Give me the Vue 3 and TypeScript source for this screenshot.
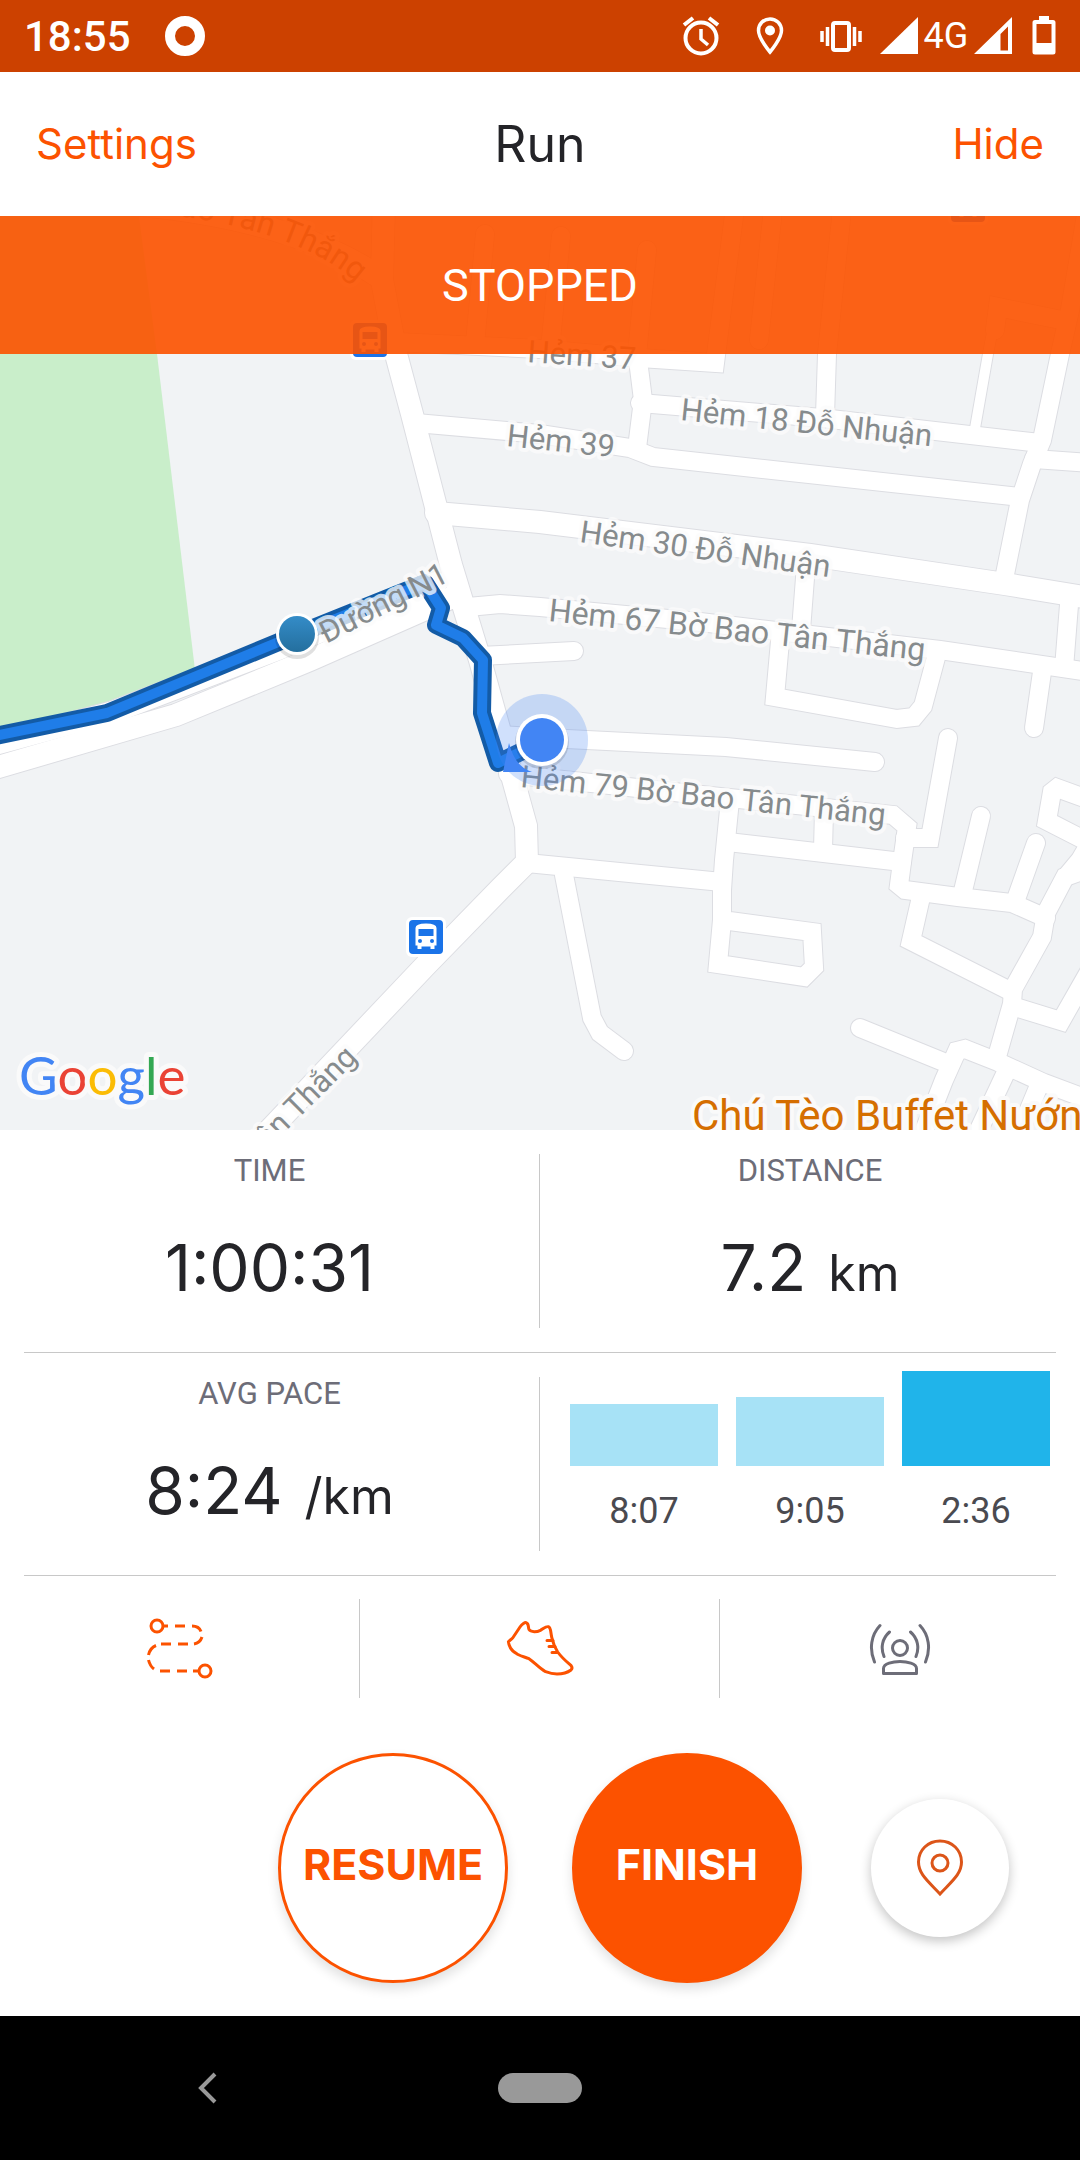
<script setup lang="ts">
interface Road { d: string; w: number }
interface Label { text: string; x: number; y: number; angle: number; large?: boolean }
interface Split { pace: string; height: number; current: boolean }

const wide: string[] = [
  'M384 200 L382 280 L396 354 L412 414 L451 565 L480 660 L526 826 L527 862 L500 889 L425 966 L262 1138',
  'M-5 768 L176 715 L310 660 L455 596',
  'M-5 744 L113 712 L278 649 L436 583',
  'M130 204 Q290 218 378 276',
  'M436 513 L540 522 L810 555 L1005 584 L1090 598',
]

const lanes: string[] = [
  'M395 342 L540 349 L640 358 L715 363 L736 200',
  'M561 236 L550 350', 'M485 234 L475 344', 'M647 250 L637 355', 'M774 200 L759 340',
  'M843 200 L827 354 L825 416',
  'M1090 192 L1070 310 L1060 354 L1042 440 L1032 464 L1020 500 L1003 584',
  'M995 330 L998 307 L1066 321',
  'M1034 459 L1090 463',
  'M638 360 L643 400 L637 448', 'M640 403 L822 418 L1040 443',
  'M416 423 L540 434 L630 448 L653 457 L1020 497',
  'M806 565 L801 630 M781 630 L775 697 L897 719 L914 717 L923 706 L938 650',
  'M1069 605 L1064 668',
  'M468 607 L500 604 L540 607 L700 622 L940 650 L1090 672',
  'M1042 672 L1034 728', 'M480 656 L574 651',
  'M500 735 L567 739 L726 747 L875 762',
  'M508 774 L720 797 L893 815 L907 827 L902 862 L899 885 L905 890 L958 897 L1012 903 L1046 918',
  'M905 838 L930 838 L948 738',
  'M527 863 L722 882',
  'M730 800 L724 860 L722 890 L722 920 L718 964 L804 977 L814 967 L812 932 L722 920',
  'M728 842 L902 862', 'M824 810 L823 850',
  'M564 875 L592 1018 L600 1033 L624 1051',
  'M981 816 L962 895', 'M1036 843 L1015 902',
  'M921 897 L911 941 L1012 992',
  'M1090 868 L1065 877 L1046 913 L1042 937 L1013 989 L1012 1004 L996 1060',
  'M1090 800 L1057 788 L1052 792 L1047 821 L1090 843 L1080 860 L1065 878',
  'M1012 1006 L1061 1021 L1090 970',
  'M860 1028 L946 1063',
  'M922 1136 L944 1080 L957 1051 L965 1049 L998 1062 L1044 1083 L1090 1100',
  'M1008 1068 L976 1136', 'M1040 1083 L1018 1136',
]

const roads: Road[] = [
  ...wide.map((d) => ({ d, w: 22 })),
  ...lanes.map((d) => ({ d, w: 18 })),
  { d: 'M996 312 L988 354 L974 434', w: 10 },
]

const route =
  'M-5 736 L107 713 L298 634 L425 583 L441 608 L436 625 L463 638 L483 660 L482 713 L498 763 L541 742'

const labels: Label[] = [
  { text: 'Hẻm 37', x: 527, y: 362, angle: 4 },
  { text: 'Hẻm 18 Đỗ Nhuận', x: 680, y: 420, angle: 6 },
  { text: 'Hẻm 39', x: 506, y: 446, angle: 6 },
  { text: 'Hẻm 30 Đỗ Nhuận', x: 579, y: 542, angle: 8 },
  { text: 'Hẻm 67 Bờ Bao Tân Thắng', x: 548, y: 621, angle: 6, large: true },
  { text: 'Hẻm 79 Bờ Bao Tân Thắng', x: 520, y: 787, angle: 6 },
  { text: 'Đường N1', x: 326, y: 644, angle: -27 },
  { text: 'Tân Thắng', x: 256, y: 1161, angle: -45 },
]

const stops = [
  { x: 353, y: 323 },
  { x: 951, y: 188 },
  { x: 409, y: 920 },
]

const splits: Split[] = [
  { pace: '8:07', height: 62, current: false },
  { pace: '9:05', height: 69, current: false },
  { pace: '2:36', height: 95, current: true },
]
</script>

<template>
  <div class="app">
    <div class="status">
      <span class="clock">18:55</span>
      <svg width="40" height="40" viewBox="0 0 40 40"><circle cx="20" cy="20" r="15" fill="none" stroke="#fff" stroke-width="10" /></svg>
      <div class="tray">
        <svg width="38" height="40" viewBox="0 0 38 40" fill="none" stroke="#fff">
          <circle cx="19" cy="22" r="15.5" stroke-width="4" />
          <path d="M19 13V23L26 29" stroke-width="3.5" />
          <path d="M2 9L11 2M36 9L27 2" stroke-width="4" />
        </svg>
        <svg width="28" height="40" viewBox="0 0 28 40">
          <path d="M14 3C7.500 3 2.500 8 2.500 14.500C2.500 22.500 14 36 14 36S25.500 22.500 25.500 14.500C25.500 8 20.500 3 14 3Z" fill="none" stroke="#fff" stroke-width="3.500" />
          <circle cx="14" cy="14.500" r="5" fill="#fff" />
        </svg>
        <svg width="42" height="40" viewBox="0 0 42 40">
          <rect x="13" y="7" width="16" height="27" rx="2" fill="none" stroke="#fff" stroke-width="4" />
          <path d="M2 15V26M7.500 11V30M34.500 11V30M40 15V26" stroke="#fff" stroke-width="3.500" />
        </svg>
        <div class="network">
          <svg width="38" height="40" viewBox="0 0 38 40"><path d="M38 1V38H0Z" fill="#fff" /></svg>
          <span>4G</span>
          <svg width="38" height="40" viewBox="0 0 38 40"><path fill-rule="evenodd" d="M38 1V38H0ZM34 10.500L26.500 18V34.500H34Z" fill="#fff" /></svg>
        </div>
        <svg width="24" height="40" viewBox="0 0 24 40">
          <path fill-rule="evenodd" d="M7 0H17V4H21Q23.500 4 23.500 6.500V36Q23.500 38.500 21 38.500H3Q0.500 38.500 0.500 36V6.500Q0.500 4 3 4H7ZM4.500 8V27H19.500V8Z" fill="#fff" />
        </svg>
      </div>
    </div>

    <header class="bar">
      <button type="button" class="link start">Settings</button>
      <h1>Run</h1>
      <button type="button" class="link end">Hide</button>
    </header>

    <section class="map">
      <svg class="canvas" viewBox="0 216 1080 914" role="img" aria-label="Route map">
        <defs>
          <path id="curve" d="M120 210 Q294 222 360 286" />
          <linearGradient id="dot" x1="0" y1="0" x2="0" y2="1">
            <stop offset="0" stop-color="#348cc8" />
            <stop offset="1" stop-color="#246f9e" />
          </linearGradient>
        </defs>
        <rect y="216" width="1080" height="914" fill="#f1f3f5" />
        <path d="M0 216H139L157 354L195 670V690L0 740Z" fill="#c9eeca" />
        <g fill="none" stroke="#dcdde2" stroke-linecap="round" stroke-miterlimit="3">
          <path v-for="(r, i) in roads" :key="i" :d="r.d" :stroke-width="r.w + 2" />
        </g>
        <g fill="none" stroke="#fff" stroke-linecap="round" stroke-miterlimit="3">
          <path v-for="(r, i) in roads" :key="i" :d="r.d" :stroke-width="r.w" />
        </g>

        <g fill="none" stroke-linejoin="round">
          <path :d="route" stroke="#135ba6" stroke-width="18" />
          <path :d="route" stroke="#1f7de8" stroke-width="10" />
        </g>

        <g v-for="(s, i) in stops" :key="i" :transform="`translate(${s.x} ${s.y})`">
          <rect x="-3" y="-3" width="40" height="40" rx="6" fill="#fff" />
          <rect width="34" height="34" rx="4" fill="#1a73e8" />
          <path d="M6.500 8Q6.500 3.500 17 3.500T27.500 8V25.500H25.500V29H21.500V26.500H12.500V29H8.500V25.500H6.500Z" fill="#fff" />
          <rect x="9.500" y="9" width="15" height="7" fill="#1a73e8" />
          <circle cx="11" cy="21" r="2" fill="#1a73e8" />
          <circle cx="23" cy="21" r="2" fill="#1a73e8" />
        </g>

        <g class="label">
          <text v-for="l in labels" :key="l.text" :class="{ large: l.large }" :transform="`translate(${l.x} ${l.y}) rotate(${l.angle})`">{{ l.text }}</text>
          <text class="large" text-anchor="end"><textPath href="#curve" startOffset="98%">Bao Tân Thắng</textPath></text>
        </g>
        <text class="place" x="692" y="1130">Chú Tèo Buffet Nướng</text>

        <ellipse cx="297" cy="638" rx="22" ry="21" fill="#000" opacity="0.12" />
        <circle cx="297" cy="634" r="21" fill="#fff" />
        <circle cx="297" cy="634" r="18" fill="url(#dot)" />

        <circle cx="542" cy="740" r="46" fill="#4285f4" opacity="0.25" />
        <path d="M509 743L503 772H532Q515 767 509 743Z" fill="#4285f4" />
        <circle cx="542" cy="742" r="27" fill="#000" opacity="0.12" />
        <circle cx="542" cy="740" r="26" fill="#fff" />
        <circle cx="542" cy="740" r="22" fill="#4285f4" />

        <text class="brand" x="19" y="1095"><tspan fill="#4285f4">G</tspan><tspan fill="#ea4335">o</tspan><tspan fill="#fbbc05">o</tspan><tspan fill="#4285f4">g</tspan><tspan fill="#34a853">l</tspan><tspan fill="#ea4335">e</tspan></text>
      </svg>
      <div class="banner">STOPPED</div>
    </section>

    <main>
      <div class="row">
        <div class="stat">
          <span class="name">TIME</span>
          <span class="value">1:00:31</span>
        </div>
        <div class="stat">
          <span class="name">DISTANCE</span>
          <span class="value">7.2 <small>km</small></span>
        </div>
      </div>
      <hr />
      <div class="row">
        <div class="stat">
          <span class="name">AVG PACE</span>
          <span class="value">8:24 <small>/km</small></span>
        </div>
        <div class="stat splits">
          <div v-for="s in splits" :key="s.pace" class="split">
            <div class="fill" :class="{ current: s.current }" :style="{ height: s.height + 'px' }"></div>
            <span>{{ s.pace }}</span>
          </div>
        </div>
      </div>
      <hr />
    </main>

    <div class="tools">
      <button type="button" aria-label="Route">
        <svg width="68" height="62" viewBox="0 0 68 62" fill="none" stroke="#fc5200" stroke-width="3">
          <circle cx="11" cy="8" r="6" />
          <circle cx="59" cy="53" r="6" />
          <path d="M17 8H22M29 8H39M46 8Q53 8 55 13.500M56 19Q54 25 48 26M42 26H32M25 26H15M10 27.500Q4 30 2.500 37M2.500 42Q4 48 8 51M14 53H24M31 53H41M47 53H53" />
        </svg>
      </button>
      <button type="button" aria-label="Shoe">
        <svg width="68" height="62" viewBox="0 -3 68 62" fill="none" stroke="#fc5200" stroke-width="3" stroke-linejoin="round" stroke-linecap="round">
          <path d="M2.400 20.700C4 19 6 18 7 16.500L14 6C16 3 19 1 20.500 1.800C23 3 22 6 23 8.500C25 11.500 31 11 34.400 9.300C37 8 40 5 42.500 5.700C45 6.500 44.500 11 45.800 16.700C47 22 49 27 51.700 31C56 37 61 41 65 44.500Q67 47 65 49C61 52 56 53 51 53C46 53 43 52 39.600 50.700C33 47 28 41 23 37.700C19 36 16 35.500 12 33.500C8 31 6 30 4.500 27Q2.500 23 2.400 20.700Z" />
          <path d="M41 19.500H47M43 25.500H49M46 31.500H51" />
        </svg>
      </button>
      <button type="button" aria-label="Beacon">
        <svg width="62" height="62" viewBox="0 -5 62 62" fill="none" stroke="#6d6d78" stroke-width="3" stroke-linecap="round" stroke-linejoin="round">
          <circle cx="31" cy="25" r="7.500" />
          <path d="M15 50.500H47.500V45.500C47.500 40.500 38 38.500 31 38.500S14.500 40.500 14.500 45.500V50.500Z" />
          <path d="M20.500 9C13 15.500 11.500 25 15 33.500M41.500 9C49 15.500 50.500 25 47 33.500M11 2.500C2 12 0 26 5.500 39M51 2.500C60 12 62 26 56.500 39" />
        </svg>
      </button>
    </div>

    <div class="actions">
      <div class="pair">
        <button type="button" class="round resume">RESUME</button>
        <button type="button" class="round finish">FINISH</button>
      </div>
      <button type="button" class="locate" aria-label="Show location">
        <svg width="48" height="58" viewBox="0 0 48 58" fill="none" stroke="#dc5519" stroke-width="3">
          <path d="M24 2C12 2 2.500 11 2.500 23C2.500 35 12 42 24 55C36 42 45.500 35 45.500 23C45.500 11 36 2 24 2Z" />
          <circle cx="24" cy="24" r="8" />
        </svg>
      </button>
    </div>

    <nav class="nav">
      <button type="button" aria-label="Back">
        <svg width="20" height="32" viewBox="0 0 20 32" fill="none" stroke="#999" stroke-width="4"><path d="M18 2L4 16L18 30" /></svg>
      </button>
      <button type="button" class="home" aria-label="Home"></button>
    </nav>
  </div>
</template>

<style>
body {
  background: #fff;
}
</style>

<style scoped>
.app {
  min-height: 100vh;
  display: flex;
  flex-direction: column;
  background: #fff;
  color: #242428;
  font-family: Inter, Roboto, sans-serif;
}
button {
  padding: 0;
  border: 0;
  background: none;
  font: inherit;
  color: inherit;
  cursor: pointer;
}
svg {
  display: block;
  flex: none;
}
.status {
  height: 72px;
  display: flex;
  align-items: center;
  padding: 0 24px;
  gap: 34px;
  background: #cc4100;
  color: #fff;
  font-family: Roboto, sans-serif;
}
.clock {
  font-size: 42px;
  font-weight: 500;
}
.tray {
  margin-left: auto;
  display: flex;
  align-items: center;
  gap: 36px;
}
.network {
  display: flex;
  align-items: center;
  justify-content: space-between;
  width: 132px;
  margin: 0 -16px 0 -18px;
  font-size: 36px;
}
.bar {
  height: 144px;
  display: grid;
  grid-template-columns: 1fr auto 1fr;
  align-items: center;
  padding: 0 36px;
}
.bar h1 {
  margin: 0;
  font-size: 50px;
  line-height: 64px;
  font-weight: 400;
}
.link {
  color: #fc5200;
  font-size: 42px;
  line-height: 48px;
}
.start {
  justify-self: start;
}
.end {
  justify-self: end;
}
.map {
  position: relative;
}
.canvas {
  width: 100%;
  height: auto;
}
.label text {
  font: 400 31px Roboto, sans-serif;
  fill: #868b8d;
  stroke: #fcfcfc;
  stroke-opacity: 0.75;
  stroke-width: 8px;
  stroke-linejoin: round;
  paint-order: stroke;
}
.label .large {
  font-size: 32px;
}
.place {
  font: 400 42px Roboto, sans-serif;
  fill: #d56e00;
  stroke: #fafafa;
  stroke-width: 8px;
  stroke-linejoin: round;
  paint-order: stroke;
}
.brand {
  font: 400 53px Lato, sans-serif;
  stroke: #fafafa;
  stroke-width: 10px;
  stroke-linejoin: round;
  paint-order: stroke;
}
.banner {
  position: absolute;
  inset: 0 0 auto;
  height: 138px;
  display: flex;
  align-items: center;
  justify-content: center;
  background: rgba(252, 82, 0, 0.91);
  color: #fff;
  font-family: Roboto, sans-serif;
  font-size: 45px;
}
.row {
  display: grid;
  grid-template-columns: 1fr 1fr;
  padding: 24px 0;
}
hr {
  height: 1px;
  margin: 0 24px;
  border: 0;
  background: #c8c8c8;
}
.stat {
  height: 174px;
  display: flex;
  flex-direction: column;
  align-items: center;
}
.stat:first-child {
  border-right: 1px solid #c8c8c8;
}
.name {
  color: #6d6d78;
  font-family: Roboto, sans-serif;
  font-size: 31px;
  line-height: 34px;
}
.value {
  margin-top: 40px;
  font-size: 64px;
  line-height: 80px;
}
.value small {
  margin-left: 4px;
  font-size: 50px;
}
.stat.splits {
  flex-direction: row;
  align-items: flex-end;
  gap: 18px;
  padding: 0 30px;
}
.split {
  flex: 1;
  text-align: center;
  color: #4a4a50;
  font-family: Roboto, sans-serif;
  font-size: 36px;
  line-height: 44px;
}
.split span {
  display: block;
  padding: 23px 0 18px;
}
.fill {
  background: #a7e2f6;
}
.fill.current {
  background: #20b4ea;
}
.tools {
  display: grid;
  grid-template-columns: repeat(3, 1fr);
  padding: 23px 0 24px;
}
.tools button {
  height: 99px;
  display: flex;
  align-items: center;
  justify-content: center;
}
.tools button:not(:last-child) {
  border-right: 1px solid #c8c8c8;
}
.actions {
  flex: 1;
  display: flex;
  align-items: center;
  justify-content: flex-end;
  gap: 69px;
  padding: 0 71px 2px 24px;
}
.pair {
  display: flex;
  gap: 64px;
}
.round {
  width: 230px;
  height: 230px;
  padding-bottom: 8px;
  border: 3px solid #fc5200;
  border-radius: 50%;
  font-size: 43px;
  font-weight: 700;
  box-shadow: 0 6px 12px rgba(0, 0, 0, 0.12);
}
.resume {
  background: #fff;
  color: #fc5200;
}
.finish {
  background: #fc5200;
  color: #fff;
}
.locate {
  width: 138px;
  height: 138px;
  display: flex;
  align-items: center;
  justify-content: center;
  border-radius: 50%;
  background: #fff;
  box-shadow: 0 4px 12px rgba(0, 0, 0, 0.24);
}
.nav {
  height: 144px;
  display: grid;
  grid-template-columns: 1fr auto 1fr;
  align-items: center;
  background: #000;
}
.nav button:first-child {
  justify-self: center;
  padding: 16px;
  margin-right: 84px;
}
.home {
  width: 84px;
  height: 30px;
  border-radius: 15px;
  background: #999;
}
</style>
